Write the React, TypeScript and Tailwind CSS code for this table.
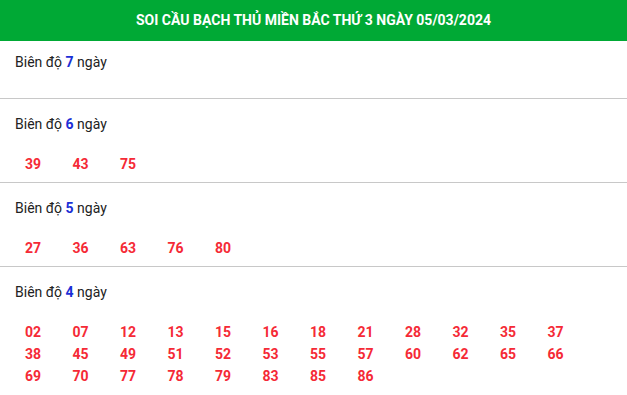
import React from "react";

const sections = [
  { days: 7, nums: [] as string[] },
  { days: 6, nums: ["39", "43", "75"] },
  { days: 5, nums: ["27", "36", "63", "76", "80"] },
  {
    days: 4,
    nums: [
      "02", "07", "12", "13", "15", "16", "18", "21", "28", "32", "35", "37",
      "38", "45", "49", "51", "52", "53", "55", "57", "60", "62", "65", "66",
      "69", "70", "77", "78", "79", "83", "85", "86",
    ],
  },
];

const App = () => {
  return (
    <div className="w-[627px] bg-white font-['Roboto',sans-serif]">
      <div className="h-[41px] bg-[#00a935] flex items-center justify-center">
        <h2 className="text-white font-bold text-[14px]">
          SOI CẦU BẠCH THỦ MIỀN BẮC THỨ 3 NGÀY 05/03/2024
        </h2>
      </div>

      {sections.map((s, i) => (
        <div
          key={s.days}
          className={
            "px-[15px] " +
            (s.nums.length === 0 ? "pt-[10px] pb-[25px] " : "pt-[14px] pb-[7px] ") +
            (i < sections.length - 1 ? "border-b border-[#c8c8c8]" : "")
          }
        >
          <div className="h-[22px] leading-[22px] text-[14px] text-[#222]">
            Biên độ <span className="font-bold text-[#1b2fd6]">{s.days}</span> ngày
          </div>
          {s.nums.length > 0 && (
            <div className="mt-[18px] flex flex-wrap">
              {s.nums.map((n) => (
                <span
                  key={n}
                  className="w-[47.5px] pl-[10px] h-[22px] leading-[22px] text-[14px] font-bold text-[#f52a36]"
                >
                  {n}
                </span>
              ))}
            </div>
          )}
        </div>
      ))}
    </div>
  );
};

export default App;
